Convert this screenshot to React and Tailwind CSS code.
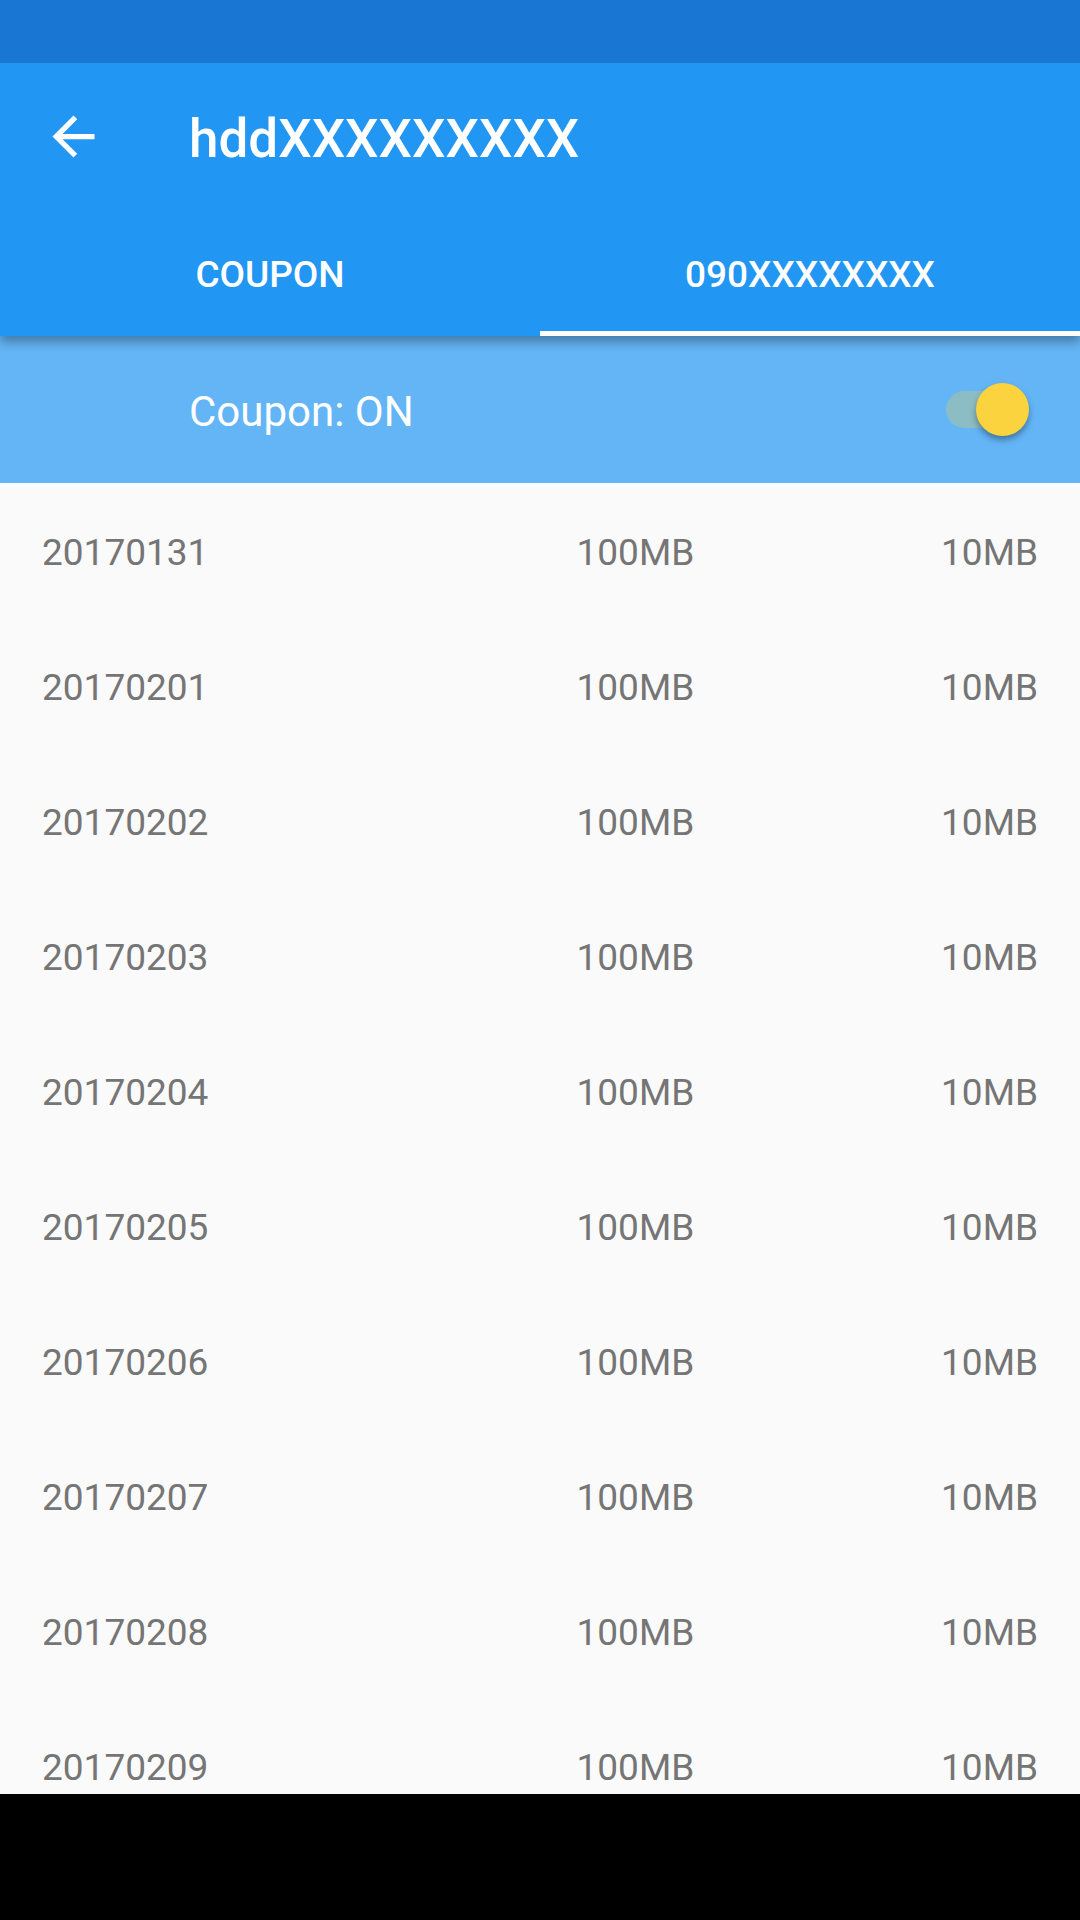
import { useState } from 'react';

const usage = [
  '20170131',
  '20170201',
  '20170202',
  '20170203',
  '20170204',
  '20170205',
  '20170206',
  '20170207',
  '20170208',
  '20170209',
].map((date) => ({ date, withCoupon: '100MB', withoutCoupon: '10MB' }));

const tabs = ['COUPON', '090XXXXXXXX'];

function AppBar({ active, onSelect }) {
  return (
    <header className="relative z-10 shrink-0 bg-[#2196f3] text-white shadow-[0_6px_10px_rgba(0,0,0,0.32)]">
      <div className="flex h-[147px] items-center">
        <button type="button" aria-label="Back" className="flex h-full w-[147px] items-center pl-[42px]">
          <svg viewBox="0 0 24 24" className="size-[63px] fill-current" aria-hidden="true">
            <path d="M20 11H7.83l5.59-5.59L12 4l-8 8 8 8 1.41-1.41L7.83 13H20v-2z" />
          </svg>
        </button>
        <h1 className="pt-1 pl-[42px] text-[53px] leading-[64px] font-medium">hddXXXXXXXXX</h1>
      </div>
      <div role="tablist" className="grid h-[126px] grid-cols-2">
        {tabs.map((label, i) => (
          <button
            key={label}
            type="button"
            role="tab"
            aria-selected={active === i}
            onClick={() => onSelect(i)}
            className="border-y-5 border-transparent pt-1 text-[37px] leading-[44px] font-medium aria-selected:border-b-white"
          >
            {label}
          </button>
        ))}
      </div>
    </header>
  );
}

function CouponSwitch() {
  const [on, setOn] = useState(true);
  return (
    <div className="flex h-[147px] shrink-0 items-center justify-between bg-[#64b5f6] pr-[51px] pl-[189px] text-white">
      <label htmlFor="coupon" className="pt-1 text-[42px] leading-[50px]">
        Coupon: {on ? 'ON' : 'OFF'}
      </label>
      <input
        id="coupon"
        type="checkbox"
        role="switch"
        checked={on}
        onChange={(e) => setOn(e.target.checked)}
        className="flex h-[37px] w-[83px] appearance-none items-center rounded-full bg-black/20 before:size-[53px] before:shrink-0 before:rounded-full before:bg-white before:shadow-[0_4px_6px_rgba(0,0,0,0.35)] checked:justify-end checked:bg-[#fbd33f]/27 checked:before:bg-[#fbd33f]"
      />
    </div>
  );
}

function UsageTable() {
  return (
    <table className="w-full table-fixed text-[37px] leading-[44px] text-[#757575]">
      <colgroup>
        <col className="w-6/14" />
        <col className="w-3/14" />
        <col className="w-5/14" />
      </colgroup>
      <tbody>
        {usage.map((row) => (
          <tr key={row.date} className="h-[135px]">
            <th scope="row" className="pt-1 pl-[42px] text-left font-normal">{row.date}</th>
            <td className="pt-1 text-right">{row.withCoupon}</td>
            <td className="pt-1 pr-[42px] text-right">{row.withoutCoupon}</td>
          </tr>
        ))}
      </tbody>
    </table>
  );
}

export default function App() {
  const [active, setActive] = useState(1);
  return (
    <div className="flex h-screen flex-col bg-[#fafafa] font-[Roboto,sans-serif]">
      <div className="relative z-20 h-[63px] shrink-0 bg-[#1976d2]" />
      <AppBar active={active} onSelect={setActive} />
      <CouponSwitch />
      <main className="min-h-0 flex-1 overflow-y-auto [scrollbar-width:none]">
        <UsageTable />
      </main>
      <div className="h-[126px] shrink-0 bg-black" />
    </div>
  );
}
